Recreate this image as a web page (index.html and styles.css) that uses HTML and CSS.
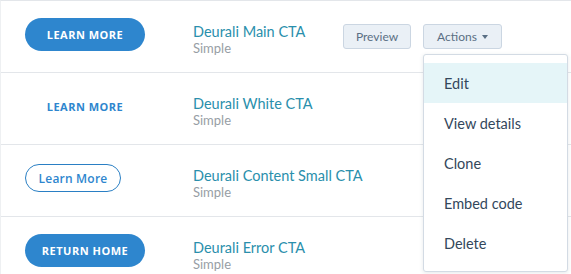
FILE: index.html
```html
<!DOCTYPE html>
<html>
<head>
<meta charset="utf-8">
<link rel="stylesheet" href="styles.css">
</head>
<body>
<div class="table">
  <div class="row">
    <div class="cta-cell"><span class="cta cta-solid">LEARN MORE</span></div>
    <div class="name-cell">
      <div class="name">Deurali Main CTA</div>
      <div class="type">Simple</div>
    </div>
    <div class="actions-cell">
      <button class="btn btn-preview">Preview</button>
      <div class="actions-wrap">
        <button class="btn btn-actions">Actions <span class="caret"></span></button>
        <ul class="menu">
          <li class="item active">Edit</li>
          <li class="item">View details</li>
          <li class="item">Clone</li>
          <li class="item">Embed code</li>
          <li class="item">Delete</li>
        </ul>
      </div>
    </div>
  </div>
  <div class="row">
    <div class="cta-cell"><span class="cta cta-text">LEARN MORE</span></div>
    <div class="name-cell">
      <div class="name">Deurali White CTA</div>
      <div class="type">Simple</div>
    </div>
  </div>
  <div class="row">
    <div class="cta-cell"><span class="cta cta-outline">Learn More</span></div>
    <div class="name-cell">
      <div class="name">Deurali Content Small CTA</div>
      <div class="type">Simple</div>
    </div>
  </div>
  <div class="row row-last">
    <div class="cta-cell"><span class="cta cta-solid">RETURN HOME</span></div>
    <div class="name-cell">
      <div class="name">Deurali Error CTA</div>
      <div class="type">Simple</div>
    </div>
  </div>
</div>
</body>
</html>
```
FILE: styles.css
```css
html, body {
  margin: 0;
  padding: 0;
  background: #ffffff;
}
body {
  font-family: Lato, "Open Sans", sans-serif;
  height: 274px;
  overflow: hidden;
}
.table {
  border-top: 1px solid #e3e6ea;
  border-left: 1px solid #eef0f2;
}
.row {
  display: grid;
  grid-template-columns: 192px 150px auto;
  height: 71px;
  border-bottom: 1px solid #e3e6ea;
  align-items: start;
}
.row-last {
  height: 57px;
  border-bottom: 0;
}
.cta-cell {
  padding-left: 24px;
  padding-top: 17px;
}
.cta {
  display: inline-flex;
  align-items: center;
  justify-content: center;
  box-sizing: border-box;
  font-family: "Open Sans", sans-serif;
  font-weight: 700;
  font-size: 11px;
  letter-spacing: 0.5px;
  border-radius: 17px;
}
.cta-solid {
  width: 120px;
  height: 33px;
  background: #2e86ce;
  color: #ffffff;
}
.cta-text {
  width: 120px;
  height: 33px;
  color: #2e86ce;
}
.cta-outline {
  width: 96px;
  height: 28px;
  margin-top: 2px;
  border: 1px solid #2a7fc4;
  color: #2e86ce;
  font-weight: 600;
  font-size: 12px;
  letter-spacing: 0.2px;
  border-radius: 14px;
}
.name-cell {
  padding-top: 22px;
  white-space: nowrap;
}
.name {
  font-size: 14.5px;
  line-height: 18px;
  color: #2a8fac;
}
.type {
  font-size: 13px;
  line-height: 14px;
  font-weight: 400;
  color: #979ea5;
}
.actions-cell {
  display: flex;
  gap: 12px;
  padding-top: 23px;
}
.btn {
  height: 25px;
  box-sizing: border-box;
  padding: 0 13px;
  background: #eaf0f6;
  border: 1px solid #cbd6e2;
  border-radius: 3px;
  font-family: Lato, sans-serif;
  font-size: 12px;
  color: #5a6f84;
  display: inline-flex;
  align-items: center;
  gap: 5px;
}
.btn-preview {
  width: 68px;
  justify-content: center;
}
.btn-actions {
  width: 79px;
  justify-content: center;
}
.caret {
  width: 0;
  height: 0;
  border-left: 3.5px solid transparent;
  border-right: 3.5px solid transparent;
  border-top: 4px solid #5a6f84;
}
.actions-wrap {
  position: relative;
}
.menu {
  position: absolute;
  top: 30px;
  left: 0;
  width: 145px;
  box-sizing: border-box;
  margin: 0;
  padding: 8px 0;
  list-style: none;
  background: #ffffff;
  border: 1px solid #d3dbe4;
  border-radius: 3px;
  box-shadow: 0 1px 4px rgba(45, 62, 80, 0.12);
  z-index: 2;
}
.item {
  height: 40px;
  display: flex;
  align-items: center;
  padding-left: 20px;
  font-size: 14.5px;
  color: #33475b;
}
.item.active {
  background: #e5f5f8;
}
```
